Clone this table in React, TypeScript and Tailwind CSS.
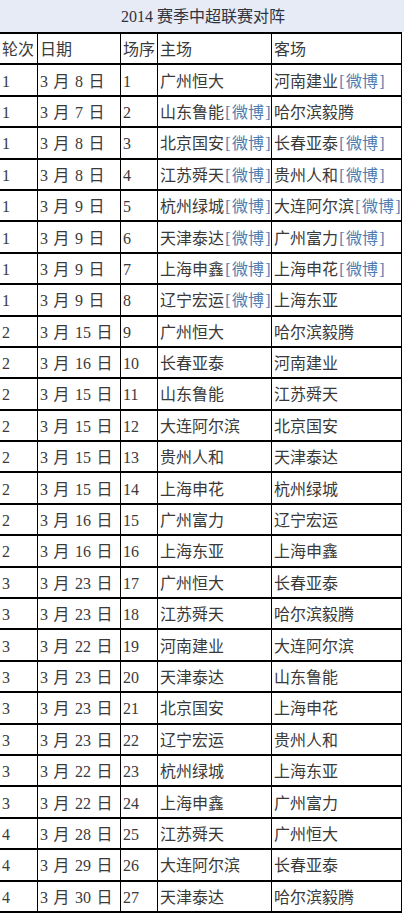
const W = '[微博]';

const d = (m: string, day: string) => `${m} 月 ${day} 日`;

const rows: [string, string, string, string, string][] = [
  ['1', d('3', '8'), '1', '广州恒大', '河南建业' + W],
  ['1', d('3', '7'), '2', '山东鲁能' + W, '哈尔滨毅腾'],
  ['1', d('3', '8'), '3', '北京国安' + W, '长春亚泰' + W],
  ['1', d('3', '8'), '4', '江苏舜天' + W, '贵州人和' + W],
  ['1', d('3', '9'), '5', '杭州绿城' + W, '大连阿尔滨' + W],
  ['1', d('3', '9'), '6', '天津泰达' + W, '广州富力' + W],
  ['1', d('3', '9'), '7', '上海申鑫' + W, '上海申花' + W],
  ['1', d('3', '9'), '8', '辽宁宏运' + W, '上海东亚'],
  ['2', d('3', '15'), '9', '广州恒大', '哈尔滨毅腾'],
  ['2', d('3', '16'), '10', '长春亚泰', '河南建业'],
  ['2', d('3', '15'), '11', '山东鲁能', '江苏舜天'],
  ['2', d('3', '15'), '12', '大连阿尔滨', '北京国安'],
  ['2', d('3', '15'), '13', '贵州人和', '天津泰达'],
  ['2', d('3', '15'), '14', '上海申花', '杭州绿城'],
  ['2', d('3', '16'), '15', '广州富力', '辽宁宏运'],
  ['2', d('3', '16'), '16', '上海东亚', '上海申鑫'],
  ['3', d('3', '23'), '17', '广州恒大', '长春亚泰'],
  ['3', d('3', '23'), '18', '江苏舜天', '哈尔滨毅腾'],
  ['3', d('3', '22'), '19', '河南建业', '大连阿尔滨'],
  ['3', d('3', '23'), '20', '天津泰达', '山东鲁能'],
  ['3', d('3', '23'), '21', '北京国安', '上海申花'],
  ['3', d('3', '23'), '22', '辽宁宏运', '贵州人和'],
  ['3', d('3', '22'), '23', '杭州绿城', '上海东亚'],
  ['3', d('3', '22'), '24', '上海申鑫', '广州富力'],
  ['4', d('3', '28'), '25', '江苏舜天', '广州恒大'],
  ['4', d('3', '29'), '26', '大连阿尔滨', '长春亚泰'],
  ['4', d('3', '30'), '27', '天津泰达', '哈尔滨毅腾'],
];

// splits "[微博]" off so it can be shown in link colour
const Team = ({ name }: { name: string }) => {
  if (!name.endsWith(W)) return <>{name}</>;
  return (
    <>
      {name.slice(0, -W.length)}
      <span className="text-[#4f7cae]">
        <span className="inline-block w-[8px] text-center">[</span>微博
        <span className="inline-block w-[8px] text-center">]</span>
      </span>
    </>
  );
};

const cell = 'flex items-center border-r border-black pl-[2px] pt-[3px] whitespace-nowrap overflow-hidden';

const Row = ({ cols, head }: { cols: [string, string, string, string, string]; head?: boolean }) => (
  <div className="flex h-[31.4px] border-b-2 border-black bg-white">
    <div className={`${cell} w-[38px]`}>{cols[0]}</div>
    <div className={`${cell} w-[83px] [word-spacing:1.5px]`}>{cols[1]}</div>
    <div className={`${cell} w-[37px]`}>{cols[2]}</div>
    <div className={`${cell} w-[114px]`}>{head ? cols[3] : <Team name={cols[3]} />}</div>
    <div className={`${cell} w-[130px]`}>{head ? cols[4] : <Team name={cols[4]} />}</div>
  </div>
);

export default function App() {
  return (
    <div
      className="w-[404px] h-[918px] bg-white text-[16px] leading-none text-[#3a3a3a]"
      style={{ fontFamily: '"Liberation Serif", "Noto Sans CJK SC", serif' }}
    >
      <div className="h-[32px] bg-[#e7ebf6] flex items-center justify-center pl-[2px] pt-[2px] text-[#2f3340]">
        2014 赛季中超联赛对阵
      </div>
      <div className="w-[402px] border-t-2 border-black">
        <Row cols={['轮次', '日期', '场序', '主场', '客场']} head />
        {rows.map((r) => (
          <Row key={r[2]} cols={r} />
        ))}
      </div>
    </div>
  );
}
